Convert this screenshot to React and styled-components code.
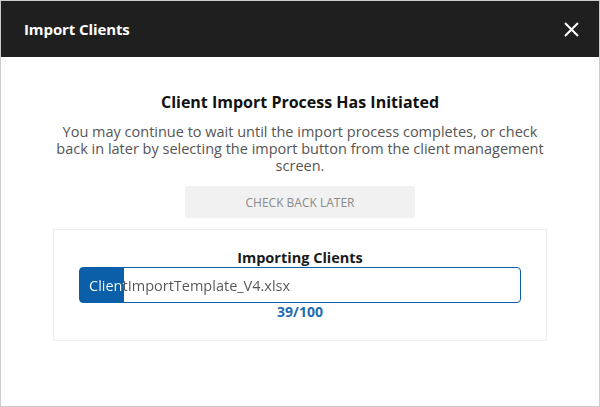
import React from "react";
import styled, { createGlobalStyle } from "styled-components";

const GlobalStyle = createGlobalStyle`
  html, body {
    margin: 0;
    padding: 0;
    background: #ffffff;
  }
  * {
    box-sizing: border-box;
  }
`;

const Modal = styled.div`
  width: 600px;
  height: 407px;
  border: 1px solid #cccccc;
  background: #ffffff;
  font-family: "Open Sans", "Liberation Sans", sans-serif;
  display: flex;
  flex-direction: column;
`;

const Header = styled.header`
  height: 56px;
  flex: none;
  background: #1f1f1f;
  display: flex;
  align-items: center;
  justify-content: space-between;
  padding: 0 20px 0 23px;
`;

const Title = styled.h1`
  margin: 0;
  color: #ffffff;
  font-size: 15px;
  font-weight: 700;
  letter-spacing: -0.1px;
`;

const CloseButton = styled.button`
  width: 16px;
  height: 16px;
  padding: 0;
  border: none;
  background: none;
  cursor: pointer;
  display: flex;
  align-items: center;
  justify-content: center;
`;

const Body = styled.div`
  display: flex;
  flex-direction: column;
  align-items: center;
  padding: 35px 52px 0;
`;

const Heading = styled.h2`
  margin: 0;
  font-size: 16px;
  line-height: 20px;
  font-weight: 700;
  color: #111111;
`;

const Message = styled.p`
  margin: 11px 0 0;
  font-size: 14.5px;
  line-height: 17px;
  color: #555555;
  text-align: center;
`;

const LaterButton = styled.button`
  margin-top: 12px;
  width: 230px;
  height: 32px;
  border: none;
  border-radius: 2px;
  background: #f1f1f1;
  color: #8a8a8a;
  font-family: inherit;
  font-size: 12px;
  text-transform: uppercase;
  cursor: pointer;
`;

const Card = styled.section`
  margin-top: 11px;
  width: 100%;
  border: 1px solid #ececec;
  border-radius: 2px;
  padding: 18px 25px 19px;
  display: flex;
  flex-direction: column;
  align-items: center;
`;

const CardTitle = styled.h3`
  margin: 0;
  font-size: 14.5px;
  line-height: 19px;
  font-weight: 700;
  color: #1a1a1a;
`;

const Bar = styled.div`
  width: 100%;
  height: 36px;
  border: 1px solid #0b5ea8;
  border-radius: 4px;
  overflow: hidden;
  background: linear-gradient(
    to right,
    #0b5ea8 ${props => props.percent}%,
    #ffffff ${props => props.percent}%
  );
`;

const BarLabel = styled.div`
  height: 100%;
  display: flex;
  align-items: center;
  padding-left: 9px;
  font-size: 14.5px;
  white-space: nowrap;
  color: transparent;
  background: linear-gradient(
    to right,
    #ffffff ${props => props.percent}%,
    #555555 ${props => props.percent}%
  );
  -webkit-background-clip: text;
  background-clip: text;
`;

const Count = styled.div`
  font-size: 14px;
  line-height: 18px;
  font-weight: 700;
  color: #1f6db2;
`;

function ProgressBar({ label, percent }) {
  return (
    <Bar percent={percent}>
      <BarLabel percent={percent}>{label}</BarLabel>
    </Bar>
  );
}

export default function App() {
  return (
    <>
      <GlobalStyle />
      <Modal>
        <Header>
          <Title>Import Clients</Title>
          <CloseButton aria-label="Close">
            <svg width="15" height="15" viewBox="0 0 15 15">
              <path d="M1 1 L14 14 M14 1 L1 14" stroke="#ffffff" strokeWidth="2" />
            </svg>
          </CloseButton>
        </Header>
        <Body>
          <Heading>Client Import Process Has Initiated</Heading>
          <Message>
            You may continue to wait until the import process completes, or check back in later by
            selecting the import button from the client management screen.
          </Message>
          <LaterButton>Check Back Later</LaterButton>
          <Card>
            <CardTitle>Importing Clients</CardTitle>
            <ProgressBar label="ClientImportTemplate_V4.xlsx" percent={10} />
            <Count>39/100</Count>
          </Card>
        </Body>
      </Modal>
    </>
  );
}
